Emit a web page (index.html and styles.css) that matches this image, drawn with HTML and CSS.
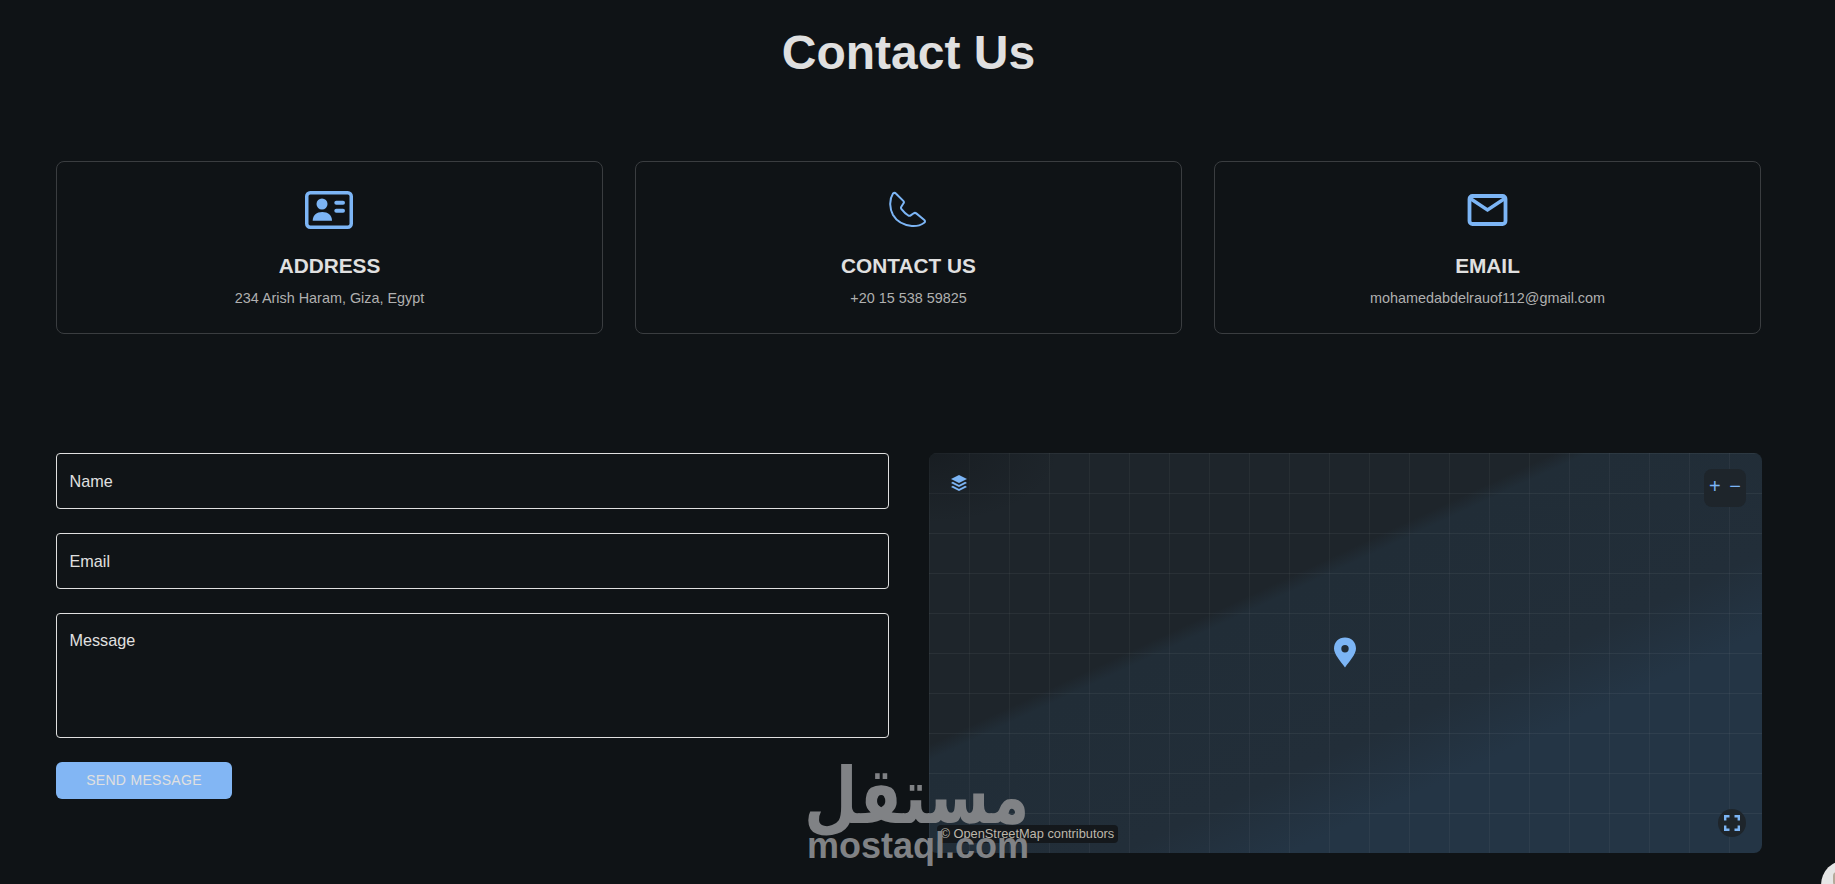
FILE: index.html
```html
<html>
  <head>
    <meta charset="utf-8">
    <title>Contact Us</title>
    <link rel="stylesheet" href="styles.css">
  </head>
  <body>
    <div class="page">
      <h1 class="page-title">Contact Us</h1>

      <div class="info-row">
        <div class="info-card">
          <svg class="info-icon" width="48" height="38" viewBox="0 0 48 38">
            <rect x="1.750" y="1.750" width="44.500" height="34.500" rx="3.500" fill="none" stroke="#7cb5f5" stroke-width="3.500"/>
            <circle cx="17" cy="13" r="5.500" fill="#7cb5f5"/>
            <path d="M7.700 29.700c0-5.500 4-8.700 9.600-8.700s9.700 3.200 9.700 8.700z" fill="#7cb5f5"/>
            <rect x="29.300" y="9.700" width="10.700" height="4" rx="2" fill="#7cb5f5"/>
            <rect x="29.300" y="17.700" width="10.700" height="4" rx="2" fill="#7cb5f5"/>
          </svg>
          <h3 class="info-title">ADDRESS</h3>
          <p class="info-text">234 Arish Haram, Giza, Egypt</p>
        </div>
        <div class="info-card">
          <svg class="info-icon" width="48" height="38" viewBox="0 0 48 38">
            <path d="M9 2.500c1-.9 2.200-.8 3.100.2l7.200 7.200c.8.8.8 1.600.2 2.400l-2.200 3.400c-.5.800-.4 1.700.2 2.500 2 2.600 4.200 4.800 6.800 6.300.8.400 1.700.400 2.400-.1l3-2.100c.9-.6 1.800-.5 2.600.1l8 6.500c1 .9.9 2.100-.1 2.800-3.500 2.500-8 3.600-12.300 3.300C19 34 12.500 30 9 24 5.800 18 4.800 9 9 2.500z" fill="none" stroke="#7cb5f5" stroke-width="2"/>
          </svg>
          <h3 class="info-title">CONTACT US</h3>
          <p class="info-text">+20 15 538 59825</p>
        </div>
        <div class="info-card">
          <svg class="info-icon" width="48" height="38" viewBox="0 0 48 38">
            <rect x="6.500" y="5" width="36" height="28" rx="3" fill="none" stroke="#7cb5f5" stroke-width="3.800"/>
            <path d="M6.500 7l18 12 18-12" fill="none" stroke="#7cb5f5" stroke-width="3.500"/>
          </svg>
          <h3 class="info-title">EMAIL</h3>
          <p class="info-text">mohamedabdelrauof112@gmail.com</p>
        </div>
      </div>

      <div class="contact-row">
        <form class="contact-form">
          <input class="form-field" type="text" placeholder="Name">
          <input class="form-field" type="text" placeholder="Email">
          <textarea class="form-field form-message" placeholder="Message"></textarea>
          <button class="send-button" type="button">SEND MESSAGE</button>
        </form>

        <div class="map">
          <div class="map-speckle"></div>
          <svg class="map-layers" width="18" height="18" viewBox="0 0 18 18">
            <path d="M9 1l8 4-8 4-8-4z" fill="#7cb5f5"/>
            <path d="M2.800 7.800L9 11l6.200-3.200L17 9l-8 4-8-4z" fill="#7cb5f5"/>
            <path d="M2.800 11.800L9 15l6.200-3.200L17 13l-8 4-8-4z" fill="#7cb5f5"/>
          </svg>
          <div class="map-zoom">
            <span>+</span>
            <span>−</span>
          </div>
          <svg class="map-pin" width="24" height="31" viewBox="0 0 24 31">
            <path fill-rule="evenodd" d="M12 .5C5.600.5 1 5 1 11.500c0 6 6.500 12.500 11 19 4.500-6.500 11-13 11-19C23 5 18.400.5 12 .5zM12 8a3.700 3.700 0 1 1 0 7.400A3.700 3.700 0 0 1 12 8z" fill="#7cb5f5"/>
          </svg>
          <div class="map-credit">© OpenStreetMap contributors</div>
          <div class="map-fullscreen">
            <svg width="16" height="16" viewBox="0 0 16 16">
              <path d="M1.200 5.500V1.200h4.300M10.500 1.200h4.300v4.300M14.800 10.500v4.300h-4.300M5.500 14.800H1.200v-4.300" fill="none" stroke="#7cb5f5" stroke-width="2.400"/>
            </svg>
          </div>
        </div>
      </div>
    </div>

    <div class="watermark">
      <div class="watermark-arabic"><span class="watermark-word">مستقل</span></div>
      <div class="watermark-latin">mostaql.com</div>
    </div>
    <div class="corner-bubble"></div>
  </body>
</html>
```

FILE: styles.css
```css
html, body {
  height: 100%;
  overflow: hidden;
}
body {
  margin: 0;
  padding: 0;
  background: #0f1316;
  color: #e0e0e0;
  font-family: "Liberation Sans", Arial, sans-serif;
}
.page {
  width: 1705px;
  padding: 0 0 0 56px;
}
.page-title {
  margin: 0;
  padding-top: 25px;
  height: 56px;
  line-height: 56px;
  font-size: 48px;
  font-weight: bold;
  text-align: center;
  color: #e0e0e0;
}
.info-row {
  display: flex;
  gap: 32px;
  margin-top: 80px;
}
.info-card {
  flex: 1;
  height: 173px;
  box-sizing: border-box;
  border: 1px solid #3a3d40;
  border-radius: 8px;
  padding-top: 29px;
  text-align: center;
}
.info-icon {
  display: block;
  margin: 0 calc(50% - 24.500px);
}
.info-title {
  margin: 23px 0 0;
  font-size: 20.800px;
  line-height: 28px;
  font-weight: bold;
  color: #e0e0e0;
}
.info-text {
  margin: 8px 0 0;
  font-size: 14.400px;
  line-height: 20px;
  color: #b0b0b0;
}
.contact-row {
  display: flex;
  gap: 40px;
  width: 1706px;
  margin-top: 119px;
}
.contact-form {
  flex: 1;
  display: flex;
  flex-direction: column;
  align-items: flex-start;
}
.form-field {
  display: block;
  width: 100%;
  height: 56px;
  box-sizing: border-box;
  margin: 0 0 24px;
  padding: 0 12.500px;
  background: #101417;
  border: 1px solid #e0e0e0;
  border-radius: 4px;
  color: #e0e0e0;
  font-family: "Liberation Sans", Arial, sans-serif;
  font-size: 16.200px;
}
.form-field::placeholder {
  color: #e0e0e0;
  opacity: 1;
}
.form-message {
  height: 125px;
  padding-top: 17px;
  resize: none;
}
.send-button {
  width: 176px;
  height: 37px;
  padding-bottom: 2px;
  background: #82b6f4;
  border: none;
  border-radius: 6px;
  color: #e0e0e0;
  font-family: "Liberation Sans", Arial, sans-serif;
  font-size: 14px;
  letter-spacing: 0.300px;
}
.map {
  position: relative;
  flex: 1;
  height: 400px;
  border-radius: 8px;
  overflow: hidden;
  background-color: #1e262d;
  background-image:
    linear-gradient(rgba(255, 255, 255, 0.05) 1px, transparent 1px),
    linear-gradient(90deg, rgba(255, 255, 255, 0.04) 1px, transparent 1px),
    linear-gradient(155deg, #1e252b 0%, #1e252b 37%, #212d37 39%, #222e39 62%, #243545 72%, #243545 100%);
  background-size: 40px 40px, 40px 40px, 100% 100%;
  background-position: 0 40px, 40px 0, 0 0;
}
.map-speckle {
  position: absolute;
  top: 0;
  left: 0;
  width: 130px;
  height: 70px;
  background: radial-gradient(ellipse at top left, rgba(20, 24, 28, 0.6), transparent 70%);
}
.map-layers {
  position: absolute;
  top: 21px;
  left: 21px;
}
.map-zoom {
  position: absolute;
  top: 16px;
  right: 16px;
  width: 42px;
  height: 38px;
  display: flex;
  align-items: center;
  justify-content: space-between;
  box-sizing: border-box;
  padding: 0 5px 3px 5px;
  border-radius: 8px;
  background: #1e252b;
  color: #7cb5f5;
  font-size: 20px;
}
.map-pin {
  position: absolute;
  top: 184px;
  left: 404px;
}
.map-credit {
  position: absolute;
  left: 8px;
  bottom: 10px;
  padding: 1px 3.500px;
  border-radius: 4px;
  background: #14181c;
  color: #bdb7ab;
  font-size: 12.800px;
  line-height: 16px;
}
.map-fullscreen {
  position: absolute;
  right: 16px;
  bottom: 16px;
  width: 28px;
  height: 28px;
  display: flex;
  align-items: center;
  justify-content: center;
  border-radius: 50%;
  background: #1e252b;
}
.watermark {
  position: absolute;
  left: 807px;
  top: 756px;
  width: 220px;
  color: #808285;
  text-align: center;
}
.watermark-arabic {
  display: flex;
  justify-content: center;
  height: 75px;
}
.watermark-word {
  flex: none;
  font-family: "DejaVu Sans", sans-serif;
  font-size: 78px;
  font-weight: bold;
  line-height: 80px;
  white-space: nowrap;
  transform: scaleX(0.79);
}
.watermark-latin {
  font-size: 36px;
  font-weight: bold;
  line-height: 30px;
}
.corner-bubble {
  position: absolute;
  left: 1821px;
  top: 860px;
  width: 50px;
  height: 50px;
  border-radius: 50%;
  background: #e6e6e6;
}
.corner-bubble::after {
  content: "";
  position: absolute;
  left: 12px;
  top: 12px;
  width: 8px;
  height: 14px;
  border-radius: 4px;
  background: #b5a99a;
}
```
